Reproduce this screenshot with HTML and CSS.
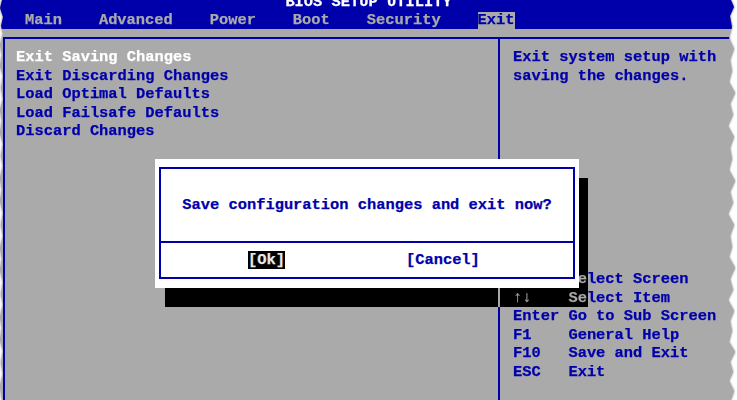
FILE: index.html
```html
<!DOCTYPE html>
<html lang="en">
<head>
    <meta charset="UTF-8">
    <meta name="viewport" content="width=device-width, initial-scale=1.0">
    <title>BIOS Setup Utility - Exit</title>
    <link rel="stylesheet" href="styles.css">
</head>
<body>
    <div class="paper">
        <div class="screen">
            <div class="topbar">
                <div class="title"><span>BIOS SETUP UTILITY</span></div>
                <div class="tabs">
                    <span class="tab">Main</span>
                    <span class="tab">Advanced</span>
                    <span class="tab">Power</span>
                    <span class="tab">Boot</span>
                    <span class="tab">Security</span>
                    <span class="tab active">Exit</span>
                </div>
            </div>

            <div class="frame">
                <div class="options">
                    <div class="option selected">Exit Saving Changes</div>
                    <div class="option">Exit Discarding Changes</div>
                    <div class="option">Load Optimal Defaults</div>
                    <div class="option">Load Failsafe Defaults</div>
                    <div class="option">Discard Changes</div>
                </div>

                <div class="side">
                    <p class="help">Exit system setup with
saving the changes.</p>

                    <div class="keys">
                        <span class="key">→←</span><span>Select Screen</span>
                        <span class="key">↑↓</span><span>Select Item</span>
                        <span class="key">Enter</span><span>Go to Sub Screen</span>
                        <span class="key">F1</span><span>General Help</span>
                        <span class="key">F10</span><span>Save and Exit</span>
                        <span class="key">ESC</span><span>Exit</span>
                    </div>
                </div>
            </div>

            <!-- popup: shadow darkens whatever lies under it -->
            <div class="dialog-shadow"></div>
            <div class="dialog">
                <div class="dialog-box">
                    <div class="dialog-msg">Save configuration changes and exit now?</div>
                    <div class="dialog-buttons">
                        <span class="btn focused">[Ok]</span>
                        <span class="btn">[Cancel]</span>
                    </div>
                </div>
            </div>
        </div>
    </div>
</body>
</html>
```

FILE: styles.css
```css
* {
    margin: 0;
    padding: 0;
    box-sizing: border-box;
}

body {
    background: #ffffff;
    font-family: "Liberation Mono", "DejaVu Sans Mono", monospace;
    font-size: 15.4px;
    font-weight: bold;
    color: #0000aa;
    -webkit-text-stroke: 0.25px currentColor;
}

/* torn screenshot edges */
.paper {
    width: 737px;
    height: 400px;
    filter: drop-shadow(0 0 1px rgba(0, 0, 0, 0.55));
}

.screen {
    position: relative;
    width: 737px;
    height: 400px;
    background: #aaaaaa;
    display: flex;
    flex-direction: column;
    overflow: hidden;
    clip-path: polygon(
        2px 0, 0 8px, 3px 17px, 1px 26px, 3px 34px, 0 45px, 2px 55px, 0 66px, 3px 76px, 1px 88px,
        3px 99px, 0 110px, 2px 121px, 0 133px, 3px 144px, 1px 156px, 3px 166px, 0 178px, 2px 190px,
        0 201px, 3px 213px, 1px 225px, 3px 236px, 0 248px, 2px 259px, 0 270px, 3px 282px, 1px 294px,
        3px 305px, 0 317px, 2px 328px, 0 340px, 3px 351px, 1px 363px, 3px 374px, 0 386px, 2px 400px,
        731px 400px, 734px 391px, 729px 381px, 733px 372px, 730px 362px, 735px 352px, 729px 342px,
        732px 331px, 730px 321px, 734px 311px, 728px 300px, 733px 290px, 730px 279px, 735px 268px,
        729px 257px, 732px 247px, 730px 236px, 734px 225px, 728px 214px, 733px 203px, 730px 192px,
        735px 181px, 729px 170px, 732px 159px, 730px 148px, 734px 137px, 728px 126px, 733px 115px,
        730px 104px, 735px 93px, 729px 82px, 732px 71px, 730px 60px, 734px 49px, 729px 38px,
        732px 27px, 730px 16px, 734px 7px, 731px 0
    );
}

.topbar {
    background: #0000aa;
    height: 29px;
    color: #aaaaaa;
}

.title {
    height: 12px;
    overflow: hidden;
    text-align: center;
    color: #ffffff;
}

.title span {
    display: block;
    line-height: 18px;
    margin-top: -7px;
}

.tabs {
    display: flex;
    gap: 4ch;
    padding-left: 25px;
    height: 17px;
    line-height: 17px;
}

.tab.active {
    background: #aaaaaa;
    color: #0000aa;
}

.frame {
    flex: 1;
    margin-top: 8px;
    margin-left: 3px;
    border-top: 2px solid #0000aa;
    border-left: 2px solid #0000aa;
    display: grid;
    grid-template-columns: 495px 1fr;
    line-height: 18.5px;
}

.options {
    border-right: 2px solid #0000aa;
    padding: 9px 0 0 11px;
}

.option.selected {
    color: #ffffff;
}

.side {
    padding: 9px 0 0 13px;
}

.help {
    white-space: pre;
}

.keys {
    margin-top: 185px;
    display: grid;
    grid-template-columns: 6ch 1fr;
    white-space: pre;
}

.dialog-shadow {
    position: absolute;
    left: 165px;
    top: 178px;
    width: 423px;
    height: 129px;
    /* gray -> black, blue -> gray, like the text-mode shadow */
    backdrop-filter: grayscale(1) invert(1) brightness(0.629) contrast(1.72);
    background: rgba(0, 0, 0, 0.01);
}

.dialog {
    position: absolute;
    left: 155px;
    top: 159px;
    width: 424px;
    height: 129px;
    background: #ffffff;
    padding: 8px 4px 9px 4px;
}

.dialog-box {
    border: 2px solid #0000aa;
    height: 100%;
    display: flex;
    flex-direction: column;
}

.dialog-msg {
    height: 74px;
    border-bottom: 2px solid #0000aa;
    display: flex;
    align-items: center;
    justify-content: center;
    line-height: 18.5px;
}

.dialog-buttons {
    flex: 1;
    display: flex;
    align-items: center;
    gap: 121px;
    padding-left: 87px;
}

.btn {
    line-height: 18px;
}

.btn.focused {
    background: #000000;
    color: #e8e8e8;
}
```
